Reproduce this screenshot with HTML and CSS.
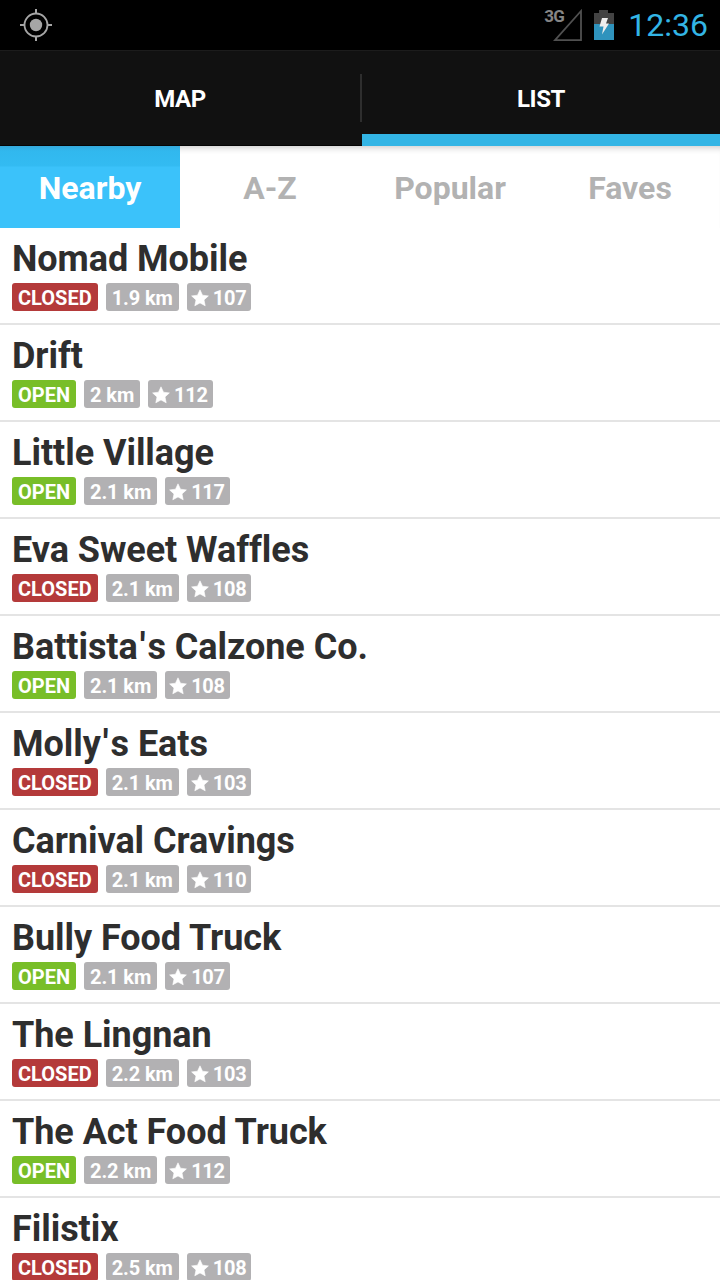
FILE: index.html
```
<!DOCTYPE html>
<html lang="en">
<head>
  <meta charset="UTF-8">
  <meta name="viewport" content="width=device-width, initial-scale=1.0">
  <title>Food Trucks</title>
  <link rel="stylesheet" href="styles.css">
</head>
<body>

  <!-- star used in every row -->
  <svg width="0" height="0" class="defs">
    <symbol id="star" viewBox="0 0 18 18">
      <path d="M9 .8l2.500 5.400 5.900.7-4.400 4 1.200 5.900L9 13.900l-5.200 2.900L5 10.900l-4.400-4 5.900-.7z" fill="#fff" stroke="#fff" stroke-width=".6" stroke-linejoin="round"/>
    </symbol>
  </svg>

  <div class="status-bar">
    <svg class="gps" width="34" height="34" viewBox="0 0 34 34">
      <circle cx="17" cy="17" r="11.500" fill="none" stroke="#a6a6a6" stroke-width="1.800"/>
      <circle cx="17" cy="17" r="6.200" fill="#a6a6a6"/>
      <path d="M17 1v5M17 28v5M1 17h5M28 17h5" stroke="#a6a6a6" stroke-width="2"/>
    </svg>
    <div class="status-right">
      <div class="signal">
        <span>3G</span>
        <svg width="30" height="34" viewBox="0 0 30 34">
          <path d="M28 3v29.200H2z" fill="none" stroke="#505050" stroke-width="1.800"/>
        </svg>
      </div>
      <svg class="battery" width="20" height="32" viewBox="0 0 20 32">
        <path d="M0 4h5V1h9v3h6v11H0z" fill="#434343"/>
        <path d="M0 15h20v16H0z" fill="#2f93bd"/>
        <path d="M8 9h6l-2 5.500h3L8 25.500l1.500-8H5.500z" fill="#eee"/>
      </svg>
      <span class="clock">12:36</span>
    </div>
  </div>

  <div class="tabs">
    <div class="tab">MAP</div>
    <div class="divider"></div>
    <div class="tab active">LIST</div>
  </div>

  <div class="filters">
    <div class="filter active">Nearby</div>
    <div class="filter">A-Z</div>
    <div class="filter">Popular</div>
    <div class="filter">Faves</div>
  </div>

  <div class="list">
    <div class="row">
      <h2>Nomad Mobile</h2>
      <div class="badges">
        <span class="badge closed">CLOSED</span>
        <span class="badge">1.9 km</span>
        <span class="badge likes"><svg><use href="#star"/></svg>107</span>
      </div>
    </div>
    <div class="row">
      <h2>Drift</h2>
      <div class="badges">
        <span class="badge open">OPEN</span>
        <span class="badge">2 km</span>
        <span class="badge likes"><svg><use href="#star"/></svg>112</span>
      </div>
    </div>
    <div class="row">
      <h2>Little Village</h2>
      <div class="badges">
        <span class="badge open">OPEN</span>
        <span class="badge">2.1 km</span>
        <span class="badge likes"><svg><use href="#star"/></svg>117</span>
      </div>
    </div>
    <div class="row">
      <h2>Eva Sweet Waffles</h2>
      <div class="badges">
        <span class="badge closed">CLOSED</span>
        <span class="badge">2.1 km</span>
        <span class="badge likes"><svg><use href="#star"/></svg>108</span>
      </div>
    </div>
    <div class="row">
      <h2>Battista<span class="apos">'</span>s Calzone Co.</h2>
      <div class="badges">
        <span class="badge open">OPEN</span>
        <span class="badge">2.1 km</span>
        <span class="badge likes"><svg><use href="#star"/></svg>108</span>
      </div>
    </div>
    <div class="row">
      <h2>Molly<span class="apos">'</span>s Eats</h2>
      <div class="badges">
        <span class="badge closed">CLOSED</span>
        <span class="badge">2.1 km</span>
        <span class="badge likes"><svg><use href="#star"/></svg>103</span>
      </div>
    </div>
    <div class="row">
      <h2>Carnival Cravings</h2>
      <div class="badges">
        <span class="badge closed">CLOSED</span>
        <span class="badge">2.1 km</span>
        <span class="badge likes"><svg><use href="#star"/></svg>110</span>
      </div>
    </div>
    <div class="row">
      <h2>Bully Food Truck</h2>
      <div class="badges">
        <span class="badge open">OPEN</span>
        <span class="badge">2.1 km</span>
        <span class="badge likes"><svg><use href="#star"/></svg>107</span>
      </div>
    </div>
    <div class="row">
      <h2>The Lingnan</h2>
      <div class="badges">
        <span class="badge closed">CLOSED</span>
        <span class="badge">2.2 km</span>
        <span class="badge likes"><svg><use href="#star"/></svg>103</span>
      </div>
    </div>
    <div class="row">
      <h2>The Act Food Truck</h2>
      <div class="badges">
        <span class="badge open">OPEN</span>
        <span class="badge">2.2 km</span>
        <span class="badge likes"><svg><use href="#star"/></svg>112</span>
      </div>
    </div>
    <div class="row">
      <h2>Filistix</h2>
      <div class="badges">
        <span class="badge closed">CLOSED</span>
        <span class="badge">2.5 km</span>
        <span class="badge likes"><svg><use href="#star"/></svg>108</span>
      </div>
    </div>
  </div>

</body>
</html>
```
FILE: styles.css
```
* {
  box-sizing: border-box;
}

body {
  margin: 0;
  height: 1280px;
  display: flex;
  flex-direction: column;
  overflow: hidden;
  background-color: #fff;
  font-family: Roboto, sans-serif;
}

.defs {
  position: absolute;
}

/* Status bar */
.status-bar {
  height: 50px;
  flex: none;
  display: flex;
  justify-content: space-between;
  align-items: center;
  padding: 0 12px 0 19px;
  background-color: #000;
}

.status-right {
  display: flex;
  align-items: center;
}

.signal {
  display: flex;
  align-items: flex-start;
  color: #858585;
  font-size: 17px;
  font-weight: 700;
  letter-spacing: -0.6px;
  line-height: 17px;
}

.signal span {
  margin-right: -11px;
}

.battery {
  margin: 0 14px 0 11px;
}

.clock {
  color: #33b5e5;
  font-size: 32px;
  line-height: 52px;
}

/* Map / List tabs */
.tabs {
  height: 96px;
  flex: none;
  display: flex;
  background-color: #111;
  border-top: 1px solid #1c1c1c;
  border-bottom: 1px solid #050505;
}

.tab {
  width: 360px;
  text-align: center;
  color: #fff;
  font-size: 24px;
  font-weight: 700;
  letter-spacing: -0.4px;
  line-height: 97px;
}

.tab.active {
  width: 358px;
  height: 95px;
  border-bottom: 12px solid #33b5e5;
}

.divider {
  width: 2px;
  height: 48px;
  margin-top: 23px;
  background-color: #2e2e2e;
}

/* Sort filters */
.filters {
  height: 82px;
  flex: none;
  display: flex;
  box-shadow: inset 0 7px 6px -5px rgba(0,0,0,0.2);
}

.filter {
  flex: 1;
  text-align: center;
  color: #b2b2b2;
  font-size: 32px;
  font-weight: 700;
  line-height: 84px;
}

.filter.active {
  color: #fff;
  background: linear-gradient(#35a9dc, #31b8ee 5px, #33bbf2 20px, #3bc2fa 21px);
}

/* Trucks */
.row {
  height: 97px;
  padding: 9px 12px 0;
  border-bottom: 2px solid #e4e4e4;
}

.row h2 {
  margin: 0 0 2px;
  color: #2e2e2e;
  font-size: 36px;
  font-weight: 700;
  letter-spacing: -0.05px;
  line-height: 44px;
  font-variant-ligatures: none;
}

.apos {
  padding: 0 2px;
}

.badges {
  display: flex;
  gap: 8px;
}

.badge {
  height: 28px;
  padding: 0 6px;
  display: flex;
  align-items: center;
  border-radius: 3px;
  background-color: #b2b1b3;
  color: #fff;
  font-size: 20px;
  font-weight: 700;
  letter-spacing: -0.1px;
  line-height: 30px;
  padding-top: 1px;
}

.badge.closed {
  background-color: #b43a3a;
  letter-spacing: 0;
}

.badge.open {
  background-color: #78be28;
  letter-spacing: 0;
}

.badge.likes {
  padding-left: 4px;
  padding-right: 5px;
  letter-spacing: -0.3px;
}

.badge svg {
  width: 18px;
  height: 18px;
  margin-right: 4px;
}
```
